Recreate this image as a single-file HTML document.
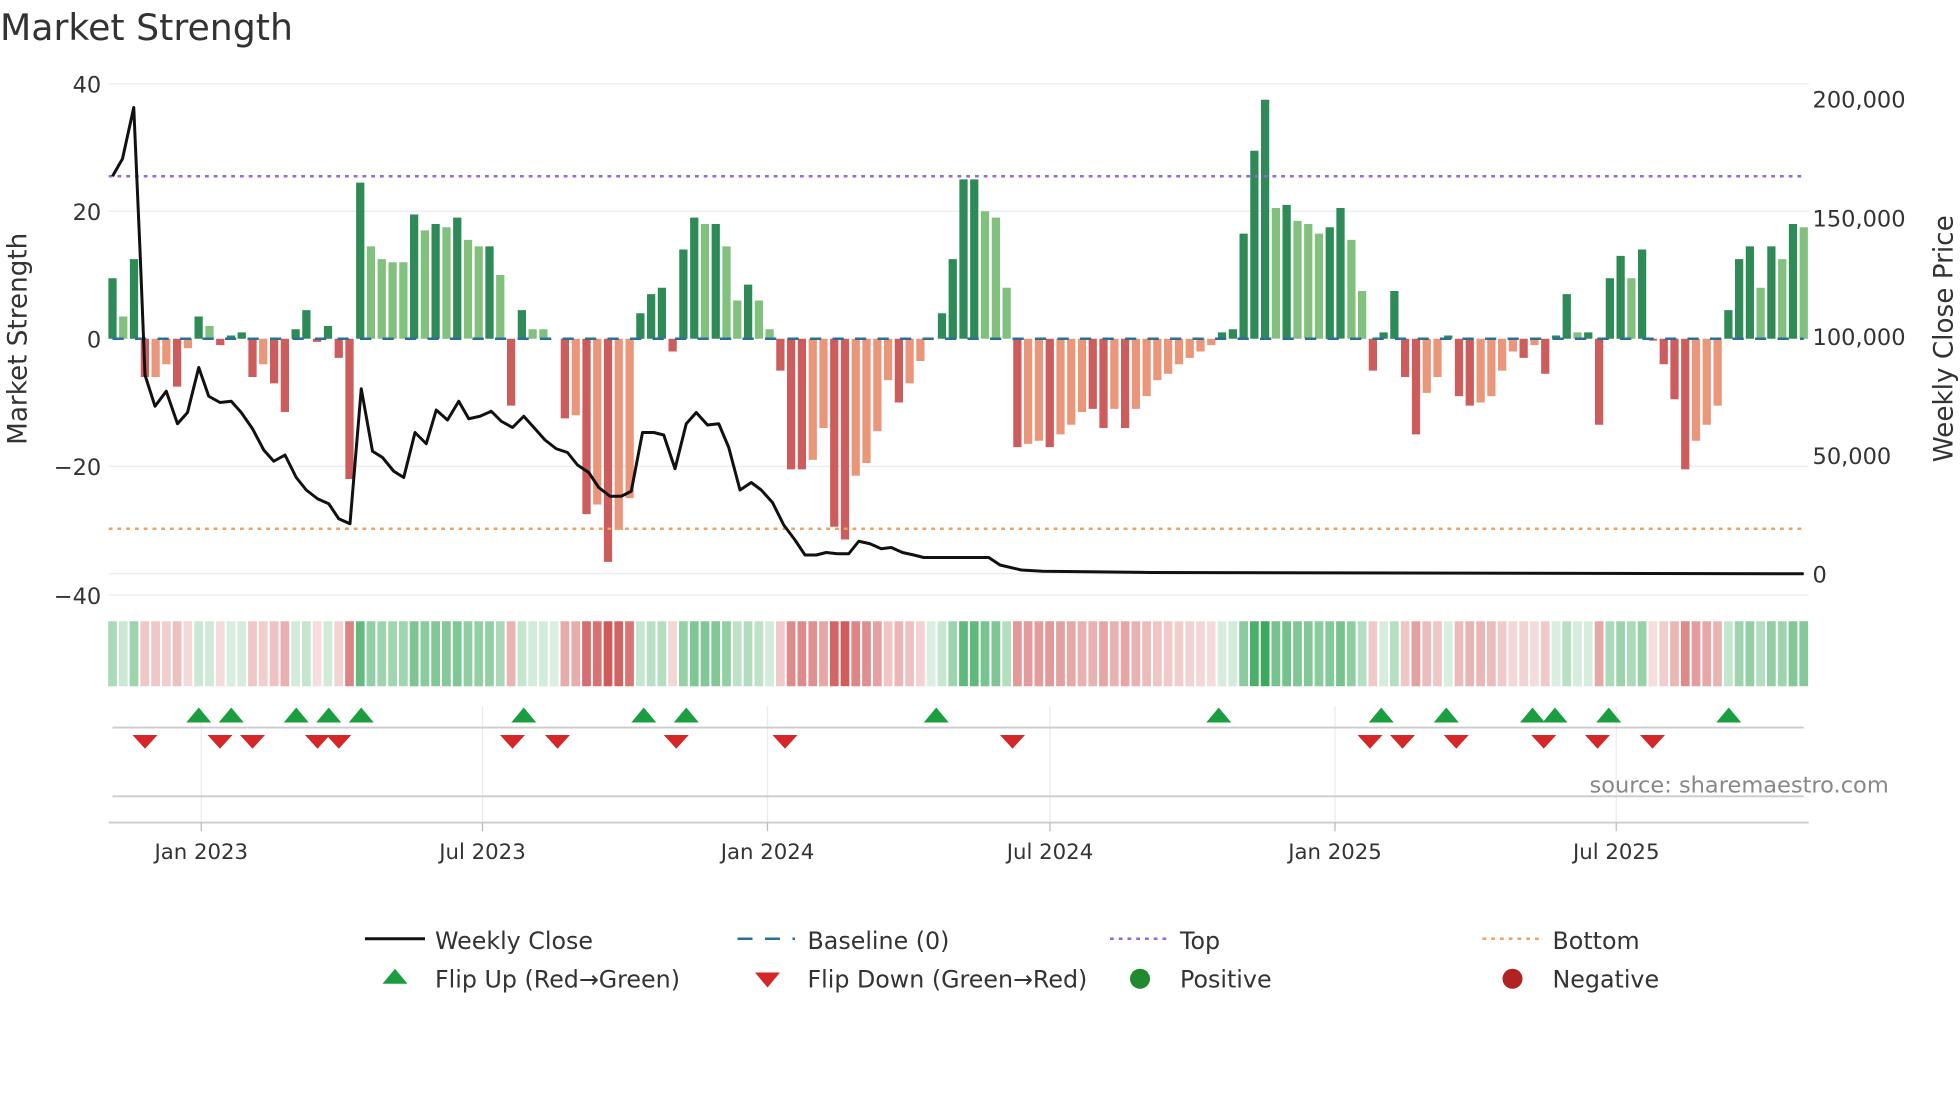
<!DOCTYPE html>
<html><head><meta charset="utf-8"><style>
html,body{margin:0;padding:0;background:#fff;width:1960px;height:1102px;overflow:hidden}
svg{display:block}
text{font-family:"DejaVu Sans","Liberation Sans",sans-serif;fill:#333}
</style></head><body>
<svg id="s" width="1960" height="1102" viewBox="0 0 1568 881.6" xmlns="http://www.w3.org/2000/svg">
<text x="0" y="32" font-size="29">Market Strength</text>
<g stroke="#e8ebf0" stroke-width="1">
<line x1="87" y1="67" x2="1447" y2="67"/><line x1="87" y1="169" x2="1447" y2="169"/>
<line x1="87" y1="373" x2="1447" y2="373"/><line x1="87" y1="476" x2="1447" y2="476"/>
<line x1="87" y1="459" x2="1447" y2="459"/>
</g>
<g font-size="18" text-anchor="end">
<text x="81" y="74">40</text><text x="81" y="176">20</text><text x="81" y="278">0</text>
<text x="81" y="380">−20</text><text x="81" y="483">−40</text>
</g>
<g font-size="18">
<text x="1450" y="86">200,000</text><text x="1450" y="181">150,000</text><text x="1450" y="276">100,000</text>
<text x="1450" y="371">50,000</text><text x="1450" y="466">0</text>
</g>
<text font-size="21" transform="translate(21,271) rotate(-90)" text-anchor="middle">Market Strength</text>
<text font-size="21" transform="translate(1562,271) rotate(-90)" text-anchor="middle">Weekly Close Price</text>
<g id="bars"></g>
<g id="band"></g>
<line x1="87" y1="141" x2="1443" y2="141" stroke="#9467d8" stroke-width="2" stroke-dasharray="3,4"/>
<line x1="87" y1="423" x2="1443" y2="423" stroke="#f0a060" stroke-width="2" stroke-dasharray="3,4"/>
<line x1="90" y1="271" x2="1443" y2="271" stroke="#2a6f97" stroke-width="2" stroke-dasharray="9,9"/>
<polyline id="pl" fill="none" stroke="#111" stroke-width="2.4" stroke-linejoin="round"/>
<g stroke="#e8ebf0"><line x1="161" y1="565" x2="161" y2="660"/><line x1="386" y1="565" x2="386" y2="660"/><line x1="614" y1="565" x2="614" y2="660"/><line x1="840" y1="565" x2="840" y2="660"/><line x1="1068" y1="565" x2="1068" y2="660"/><line x1="1293" y1="565" x2="1293" y2="660"/></g>
<line x1="90" y1="582" x2="1443" y2="582" stroke="#ccc" stroke-width="1.5"/>
<line x1="90" y1="637" x2="1443" y2="637" stroke="#ccc" stroke-width="1.5"/>
<line x1="87" y1="658" x2="1447" y2="658" stroke="#ccc" stroke-width="1.5"/>
<g stroke="#bbb"><line x1="161" y1="658" x2="161" y2="665"/><line x1="386" y1="658" x2="386" y2="665"/><line x1="614" y1="658" x2="614" y2="665"/><line x1="840" y1="658" x2="840" y2="665"/><line x1="1068" y1="658" x2="1068" y2="665"/><line x1="1293" y1="658" x2="1293" y2="665"/></g>
<g id="mk"></g>
<g font-size="17" text-anchor="middle">
<text x="161" y="687">Jan 2023</text><text x="386" y="687">Jul 2023</text><text x="614" y="687">Jan 2024</text>
<text x="840" y="687">Jul 2024</text><text x="1068" y="687">Jan 2025</text><text x="1293" y="687">Jul 2025</text>
</g>
<text x="1511" y="634" font-size="18" text-anchor="end" style="fill:#888">source: sharemaestro.com</text>
<g font-size="19">
<line x1="292" y1="751" x2="340" y2="751" stroke="#111" stroke-width="2.4"/><text x="348" y="759">Weekly Close</text>
<line x1="590" y1="751" x2="636" y2="751" stroke="#2a6f97" stroke-width="2" stroke-dasharray="12,10"/><text x="646" y="759">Baseline (0)</text>
<line x1="888" y1="751" x2="934" y2="751" stroke="#9467d8" stroke-width="2" stroke-dasharray="3,4"/><text x="944" y="759">Top</text>
<line x1="1186" y1="751" x2="1232" y2="751" stroke="#f0a060" stroke-width="2" stroke-dasharray="3,4"/><text x="1242" y="759">Bottom</text>
<polygon points="306,787 316,775 326,787" fill="#1a9e3f"/><text x="348" y="790">Flip Up (Red→Green)</text>
<polygon points="604,778 624,778 614,790" fill="#d62728"/><text x="646" y="790">Flip Down (Green→Red)</text>
<circle cx="912" cy="783" r="8" fill="#1f8a2e"/><text x="944" y="790">Positive</text>
<circle cx="1210" cy="783" r="8" fill="#b22222"/><text x="1242" y="790">Negative</text>
</g>
</svg>
<script>
var d="9.5G 3.5g 12.5G -6R -6r -4r -7.5R -1.5r 3.5G 2g -1R 0.5G 1G -6R -4r -7R -11.5R 1.5G 4.5G -0.5R 2G -3R -22R 24.5G 14.5g 12.5g 12g 12g 19.5G 17g 18G 17.5g 19G 15.5g 14.5g 14.5G 10g -10.5R 4.5G 1.5g 1.5g 0G -12.5R -12r -27.5R -26r -35R -30r -25r 4G 7G 8G -2R 14G 19G 18g 18G 14.5g 6g 8.5G 6g 1.5g -5R -20.5R -20.5R -19r -14r -29.5R -31.5R -21.5r -19.5r -14.5r -6.5r -10R -7r -3.5r 0G 4G 12.5G 25G 25G 20g 19g 8g -17R -16.5r -16r -17R -15r -13.5r -11.5r -11R -14R -11r -14R -11r -9r -6.5r -5.5r -4r -3r -2r -1r 1G 1.5G 16.5G 29.5G 37.5G 20.5g 21G 18.5g 18g 16.5g 17.5G 20.5G 15.5g 7.5g -5R 1G 7.5G -6R -15R -8.5r -6r 0.5G -9R -10.5R -10r -9r -5r -2r -3R -1r -5.5R 0.5G 7G 1g 1G -13.5R 9.5G 13G 9.5g 14G -0.3R -4R -9.5R -20.5R -16r -13.5r -10.5r 4.5G 12.5G 14.5G 8g 14.5G 12.5g 18G 17.5g".split(" ");
var C={G:"#2e8b57",g:"#82c07e",R:"#cd5c5c",r:"#e9967a"};
var n=d.length,x0=90,x1=1443,st=(x1-x0)/(n-1),h="",b="";
for(var i=0;i<n;i++){var v=parseFloat(d[i]),t=d[i].slice(-1),x=x0+st*i,y=271-v*5.1;
h+='<rect x="'+(x-3.3).toFixed(1)+'" y="'+Math.min(y,271).toFixed(1)+'" width="6.6" height="'+Math.abs(v*5.1).toFixed(1)+'" fill="'+C[t]+'"/>';
var a=Math.min(0.95,0.18+Math.abs(v)/42),col=v>=0?"50,165,85":"205,80,80";
b+='<rect x="'+(x-st/2+0.8).toFixed(1)+'" y="497" width="'+(st-1.6).toFixed(1)+'" height="52" fill="rgba('+col+','+a.toFixed(2)+')"/>';}
document.getElementById("bars").innerHTML=h;document.getElementById("band").innerHTML=b;
document.getElementById("pl").setAttribute("points","90,141 98,127 107,86 112,200 116,300 124,325 133,313 142,339 150,330 159,294 167,317 176,322 185,321 193,330 202,343 211,360 219,369 228,364 237,382 245,392 254,399 263,403 271,415 280,419 289,311 298,361 306,366 315,377 323,382 332,346 341,355 349,328 358,336 367,321 375,335 384,333 393,329 401,337 410,342 419,333 428,343 436,352 445,359 454,362 462,372 471,378 479,390 488,397 497,397 505,393 514,346 523,346 531,348 540,375 549,339 557,330 566,340 575,339 583,358 592,392 601,386 609,392 618,402 627,420 636,432 644,444 653,444 661,442 670,443 679,443 687,433 696,435 705,439 713,438 722,442 731,444 739,446 748,446 765,446 782,446 791,446 800,452 817,456 834,457 920,458 1443,459");
var up=[159,185,237,263,289,419,515,549,749,975,1105,1157,1226,1244,1287,1383],dn=[116,176,202,254,271,410,446,541,628,810,1096,1122,1165,1235,1278,1322],m="";
up.forEach(function(x){m+='<polygon points="'+(x-10)+',578 '+x+',566 '+(x+10)+',578" fill="#1a9e3f"/>';});
dn.forEach(function(x){m+='<polygon points="'+(x-10)+',588 '+(x+10)+',588 '+x+',599" fill="#d62728"/>';});
document.getElementById("mk").innerHTML=m;
</script>
</body></html>
